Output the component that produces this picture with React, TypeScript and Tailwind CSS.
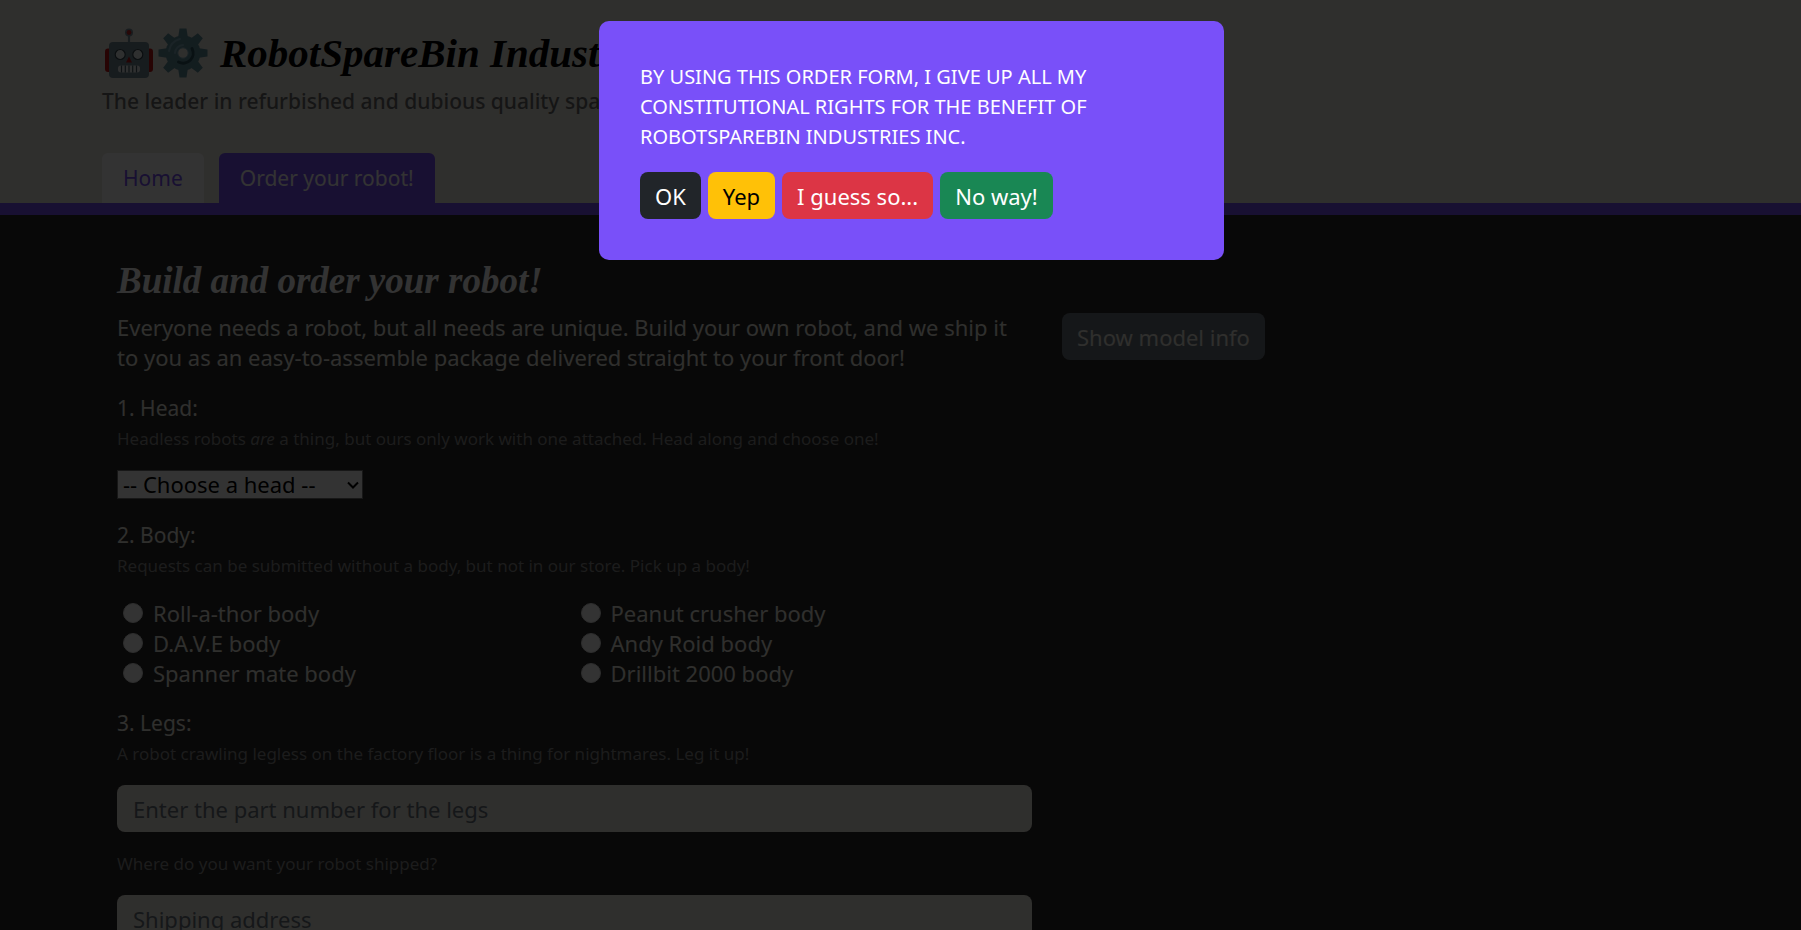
import React from "react";

const bodies = [
  "Roll-a-thor body",
  "Peanut crusher body",
  "D.A.V.E body",
  "Andy Roid body",
  "Spanner mate body",
  "Drillbit 2000 body",
];

function RobotIcon() {
  return (
    <svg viewBox="0 0 50 50" className="h-[50px] w-[50px]" aria-hidden="true">
      <rect x="23.9" y="6" width="2.2" height="9" fill="#78909c" />
      <circle cx="25" cy="4.500" r="4" fill="#78909c" />
      <circle cx="25" cy="4.500" r="2.400" fill="#c62828" />
      <rect x="1" y="20.500" width="7" height="23.500" rx="3" fill="#c01818" />
      <rect x="42" y="20.500" width="7" height="23.500" rx="3" fill="#c01818" />
      <rect x="5" y="14" width="40" height="36" rx="4" fill="#748b97" />
      <circle cx="16.200" cy="26.500" r="5" fill="#eceff1" stroke="#37474f" strokeWidth="1.2" />
      <circle cx="33.800" cy="26.500" r="5" fill="#eceff1" stroke="#37474f" strokeWidth="1.2" />
      <path d="M25 28.500 L28 34.500 H22 Z" fill="#b71c1c" />
      <rect x="14" y="37.500" width="22" height="7" rx="3" fill="#eceff1" />
      <path d="M17.500 37.500v7M21.300 37.500v7M25 37.500v7M28.700 37.500v7M32.500 37.500v7" stroke="#455a64" strokeWidth="1.2" />
    </svg>
  );
}

function GearIcon() {
  return (
    <svg viewBox="0 0 50 50" className="h-[50px] w-[50px]" aria-hidden="true">
      <g fill="#62909c">
        <path id="tooth" d="M21.500 0.500h7l1.500 10h-10z" />
        <use href="#tooth" transform="rotate(45 25 25)" />
        <use href="#tooth" transform="rotate(90 25 25)" />
        <use href="#tooth" transform="rotate(135 25 25)" />
        <use href="#tooth" transform="rotate(180 25 25)" />
        <use href="#tooth" transform="rotate(225 25 25)" />
        <use href="#tooth" transform="rotate(270 25 25)" />
        <use href="#tooth" transform="rotate(315 25 25)" />
        <circle cx="25" cy="25" r="17.500" />
      </g>
      <path d="M11 23a15 15 0 0 1 11-12" fill="none" stroke="#82aebf" strokeWidth="2" strokeLinecap="round" />
      <path d="M34 20.500a10 10 0 0 1-13.500 13.500" fill="none" stroke="#2f5562" strokeWidth="3" strokeLinecap="round" />
      <path d="M17 25a8.500 8.500 0 0 1 8-8" fill="none" stroke="#82aebf" strokeWidth="2" strokeLinecap="round" />
      <circle cx="25" cy="25" r="5.200" fill="#ebe8e0" stroke="#82aebf" strokeWidth="1" />
    </svg>
  );
}

const hint = "pt-px text-[17px] leading-[30px] text-[#8a8a8a]";
const buttonBase = "h-[47px] rounded-lg px-[15px]";
const field =
  "mt-4 block h-[47px] w-full rounded-lg bg-[#ebe8e0] px-4 text-black placeholder:text-[#6c757d]";

export default function App() {
  return (
    <div className="h-screen overflow-hidden bg-[#282828] font-['Noto_Sans',sans-serif] text-[22px] leading-[30px] text-white">
      <header className="border-b-[12px] border-[#7950f9] bg-[#ebe8e0] pt-7 pr-[79px] pl-[102px]">
        <div className="flex items-center gap-1 pl-[2px]">
          <RobotIcon />
          <GearIcon />
          <h1 className="pl-2 font-['Liberation_Serif',serif] text-[41px] leading-[50px] font-bold text-black italic">
            RobotSpareBin Industries Inc.
          </h1>
        </div>
        <p className="mt-2 text-[21px] font-medium text-[#6c6c6c]">
          The leader in refurbished and dubious quality spare parts!
        </p>
        <nav className="mt-[37px] flex gap-[15px] text-[21px]">
          <a href="#home" className="h-[50px] rounded-t-md bg-white px-[21px] pt-[10px] text-[#7950f9]">
            Home
          </a>
          <a href="#order" className="h-[50px] rounded-t-md bg-[#7950f9] px-[21px] pt-[10px] text-white">
            Order your robot!
          </a>
        </nav>
      </header>

      <main className="grid grid-cols-12 pt-[42px] pr-[79px] pl-[102px]">
        <form className="col-span-7 px-[15px]">
          <h2 className="mb-[7px] font-['Liberation_Serif',serif] text-[37px] leading-[48px] font-bold whitespace-nowrap italic">
            Build and order your robot!
          </h2>
          <p className="text-[#ebe8e0]">
            Everyone needs a robot, but all needs are unique. Build your own robot, and we ship it
            to you as an easy-to-assemble package delivered straight to your front door!
          </p>

          <label htmlFor="head" className="mt-[21px] block text-[21px] text-[#ebe8e0]">1. Head:</label>
          <p className={hint}>
            Headless robots <em>are</em> a thing, but ours only work with one attached. Head along and choose one!
          </p>
          <div className="relative mt-4 w-[246px]">
            <select id="head" className="block h-[29px] w-full appearance-none border border-[#767676] bg-white pl-[5px] leading-[27px] text-black">
              <option>-- Choose a head --</option>
            </select>
            <svg viewBox="0 0 12 8" className="pointer-events-none absolute top-[11px] right-[4px] h-2 w-3" aria-hidden="true">
              <path d="M1 1.500 6 6.500 11 1.500" fill="none" stroke="#000000" strokeWidth="2" />
            </svg>
          </div>

          <fieldset className="mt-[21px]">
            <legend className="text-[21px] text-[#ebe8e0]">2. Body:</legend>
            <p className={hint}>
              Requests can be submitted without a body, but not in our store. Pick up a body!
            </p>
            <div className="mt-[17px] grid grid-cols-2">
              {bodies.map((body) => (
                <label key={body} className="flex items-center gap-[10px] pl-[6px] text-[#ebe8e0]">
                  <input type="radio" name="body" className="h-5 w-5 appearance-none rounded-full border border-[#dddddd] bg-white" />
                  {body}
                </label>
              ))}
            </div>
          </fieldset>

          <label htmlFor="legs" className="mt-5 block text-[21px] text-[#ebe8e0]">3. Legs:</label>
          <p className={hint}>
            A robot crawling legless on the factory floor is a thing for nightmares. Leg it up!
          </p>
          <input id="legs" type="text" placeholder="Enter the part number for the legs" className={field} />
          <label htmlFor="address" className={`mt-4 block ${hint}`}>
            Where do you want your robot shipped?
          </label>
          <input id="address" type="text" placeholder="Shipping address" className={field} />
        </form>
        <aside className="col-span-5 px-[15px] pt-[56px]">
          <button type="button" className={`${buttonBase} bg-[#6c757d] text-[#ebe8e0]`}>
            Show model info
          </button>
        </aside>
      </main>

      <div className="fixed inset-0 flex items-start justify-center bg-black/80 pt-[21px] pl-[22px]">
        <div role="dialog" aria-modal="true" className="w-[625px] rounded-[10px] bg-[#7950f9] p-[41px]">
          <p className="mb-5 text-[20px]">
            BY USING THIS ORDER FORM, I GIVE UP ALL MY CONSTITUTIONAL RIGHTS FOR THE BENEFIT OF
            ROBOTSPAREBIN INDUSTRIES INC.
          </p>
          <div className="flex gap-[7px]">
            <button type="button" className={`${buttonBase} bg-[#212529] text-white`}>OK</button>
            <button type="button" className={`${buttonBase} bg-[#ffc107] text-black`}>Yep</button>
            <button type="button" className={`${buttonBase} bg-[#dc3545] text-white`}>I guess so...</button>
            <button type="button" className={`${buttonBase} bg-[#198754] text-white`}>No way!</button>
          </div>
        </div>
      </div>
    </div>
  );
}
